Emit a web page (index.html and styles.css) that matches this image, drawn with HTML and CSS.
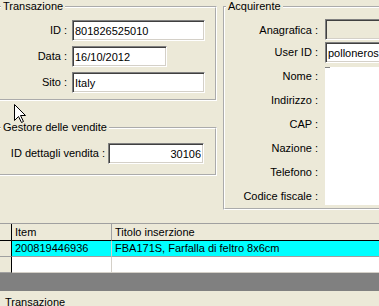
FILE: index.html
```html
<!DOCTYPE html>
<html>
<head>
    <title>Dettagli transazione</title>
    <link rel="stylesheet" href="styles.css">
</head>
<body>
    <div class="top">
        <div class="left">
            <fieldset class="group tx">
                <legend>Transazione</legend>
                <div class="form">
                    <label>ID :</label>
                    <input class="field long" value="801826525010">
                    <label>Data :</label>
                    <input class="field short" value="16/10/2012">
                    <label>Sito :</label>
                    <input class="field long" value="Italy">
                </div>
            </fieldset>

            <fieldset class="group sales">
                <legend>Gestore delle vendite</legend>
                <div class="sales-row">
                    <label>ID dettagli vendita :</label>
                    <input class="field num" value="30106">
                </div>
            </fieldset>
        </div>

        <fieldset class="group buyer">
            <legend>Acquirente</legend>
            <div class="buyer-form">
                <label>Anagrafica :</label>
                <input class="field off" value="" disabled>
                <label>User ID :</label>
                <input class="field" value="polloneros">
                <div class="memo"></div>
                <label class="r3">Nome :</label>
                <label class="r4">Indirizzo :</label>
                <label class="r5">CAP :</label>
                <label class="r6">Nazione :</label>
                <label class="r7">Telefono :</label>
                <label class="r8">Codice fiscale :</label>
            </div>
        </fieldset>
    </div>

    <!-- griglia degli oggetti venduti -->
    <div class="items">
        <div class="cell stub head"></div>
        <div class="cell head sep">Item</div>
        <div class="cell head">Titolo inserzione</div>

        <div class="cell stub"></div>
        <div class="cell sel sep">200819446936</div>
        <div class="cell sel">FBA171S, Farfalla di feltro 8x6cm</div>

        <div class="cell stub"></div>
        <div class="cell blank sep"></div>
        <div class="cell blank"></div>
    </div>
    <div class="band"></div>
    <div class="next">Transazione</div>

    <svg class="cursor" width="13" height="20" viewBox="0 0 13 20">
        <polygon points="0.5,0.5 0.5,16.5 4.5,12.5 7.5,18.5 9.5,17.5 6.5,11.5 11.5,11.5" fill="#fff" stroke="#000" stroke-width="1"/>
    </svg>
</body>
</html>
```

FILE: styles.css
```css
* {
    box-sizing: border-box;
}

body {
    margin: 0;
    width: 379px;
    height: 306px;
    overflow: hidden;
    position: relative;
    background-color: #ece9d8;
    font-family: "Liberation Sans", Arial, sans-serif;
    font-size: 11px;
    color: #000;
}

.top {
    display: flex;
    height: 223px;
}

.left {
    width: 223px;
    margin-left: -6px;
    flex: none;
}

.group {
    margin: 0;
    padding: 0;
    min-width: 0;
    border: 2px groove #fff;
}

.group legend {
    padding: 0 2px;
    line-height: 13px;
}

label {
    white-space: nowrap;
    line-height: 13px;
}

.field {
    height: 21px;
    margin: 0;
    padding: 0 2px;
    font-family: "Liberation Sans", Arial, sans-serif;
    font-size: 11px;
    color: #000;
    background-color: #fff;
    border: 1px solid;
    border-color: #808080 #fff #fff #808080;
    box-shadow: inset 1px 1px 0 #404040, inset -1px -1px 0 #d4d0c8;
    outline: none;
}

.field.off {
    background-color: #ece9d8;
}

/* Transazione */
.tx {
    padding: 7px 0 6px;
}

.tx legend,
.sales legend {
    margin-left: 5px;
}

.form {
    display: grid;
    grid-template-columns: 71px auto;
    grid-auto-rows: 21px;
    column-gap: 5px;
    row-gap: 5px;
    align-items: center;
}

.form label {
    justify-self: end;
}

.long {
    width: 133px;
}

.short {
    width: 95px;
}

/* Gestore delle vendite */
.sales {
    margin-top: 20px;
    padding: 9px 0 10px;
}

.sales-row {
    display: grid;
    grid-template-columns: 109px 96px;
    column-gap: 3px;
    align-items: center;
}

.sales-row label {
    justify-self: end;
}

.num {
    width: 96px;
    text-align: right;
}

/* Acquirente */
.buyer {
    margin-left: 6px;
    width: 220px;
    flex: none;
    align-self: flex-start;
    padding: 6px 0 0;
}

.buyer legend {
    margin-left: 1px;
}

.buyer-form {
    display: grid;
    grid-template-columns: 93px 100px;
    grid-template-rows: 23px 22px repeat(6, 24px);
    column-gap: 7px;
}

.buyer-form label {
    justify-self: end;
    align-self: center;
}

.buyer-form label:nth-child(1) {
    align-self: start;
    margin-top: 5px;
}

.buyer-form label:nth-child(3) {
    align-self: start;
    margin-top: 4px;
}

.buyer-form .field {
    width: 100px;
}

.buyer-form .r3 { grid-row: 3; grid-column: 1; }
.buyer-form .r4 { grid-row: 4; grid-column: 1; }
.buyer-form .r5 { grid-row: 5; grid-column: 1; }
.buyer-form .r6 { grid-row: 6; grid-column: 1; }
.buyer-form .r7 { grid-row: 7; grid-column: 1; }
.buyer-form .r8 { grid-row: 8; grid-column: 1; }

.memo {
    grid-row: 3 / span 6;
    grid-column: 2;
    margin: 3px 0;
    background-color: #fff;
    position: relative;
}

.memo::before {
    content: "";
    position: absolute;
    left: 0;
    top: 0;
    width: 5px;
    height: 1px;
    background-color: #808080;
}

/* griglia */
.items {
    display: grid;
    grid-template-columns: 12px 100px 300px;
    grid-template-rows: 17px 16px 16px;
    width: 412px;
    border-top: 1px solid #a0a0a0;
}

.cell {
    padding-left: 3px;
    line-height: 15px;
    white-space: nowrap;
    overflow: hidden;
    border-bottom: 1px solid #d4d0c8;
}

.cell.sep {
    border-right: 1px solid #d4d0c8;
}

.cell.stub {
    background-color: #ece9d8;
    border-right: 1px solid #000;
    border-bottom: 1px solid #a0a0a0;
}

.cell.head {
    background-color: #ece9d8;
    border-bottom: 1px solid #000;
    padding-top: 2px;
    line-height: 13px;
}

.cell.head.sep {
    border-right: 1px solid #a0a0a0;
}

.cell.sel {
    background-color: #00ffff;
    border-bottom: 1px solid #a0a0a0;
}

.cell.blank {
    background-color: #fff;
}

.band {
    height: 18px;
    background-color: #808080;
}

.next {
    padding: 5px 0 0 5px;
    line-height: 13px;
}

.cursor {
    position: absolute;
    left: 14px;
    top: 104px;
}
```
